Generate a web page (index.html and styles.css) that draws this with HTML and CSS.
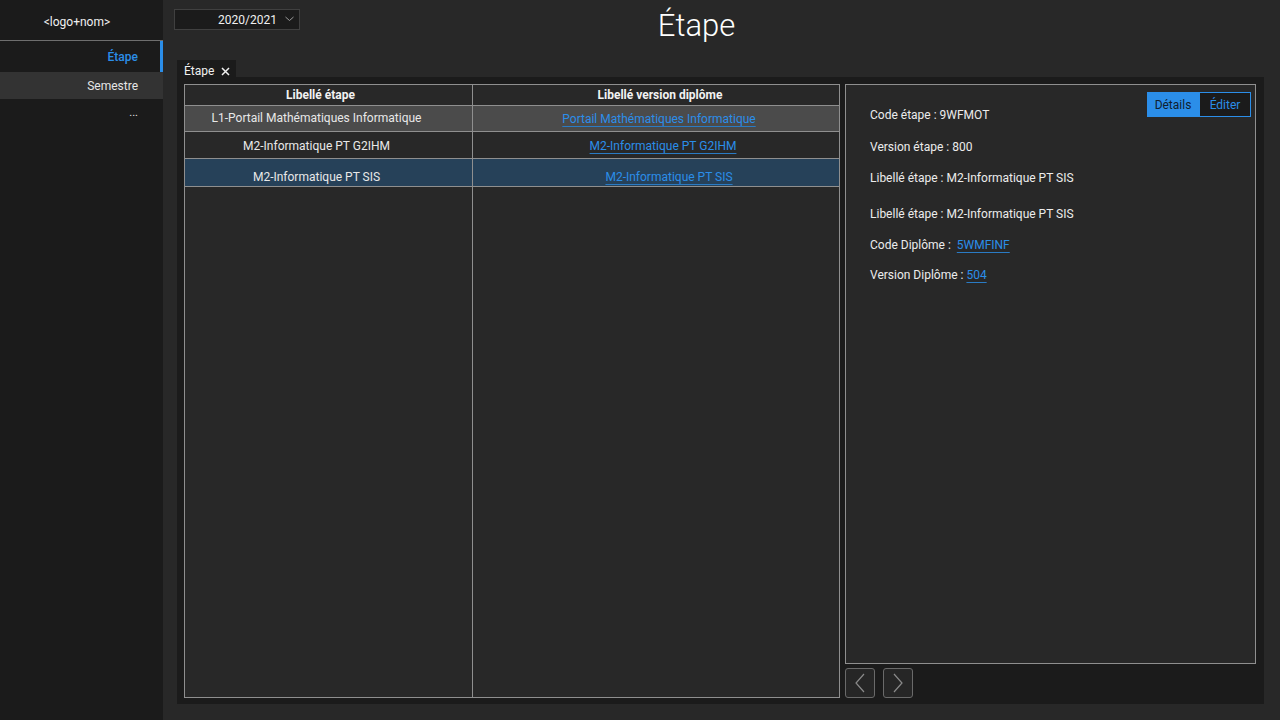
FILE: index.html
```html
<!DOCTYPE html>
<html lang="fr">
<head>
<meta charset="utf-8">
<title>Étape</title>
<link rel="stylesheet" href="styles.css">
</head>
<body>
<div class="app">
  <aside class="sidebar">
    <div class="logo">&lt;logo+nom&gt;</div>
    <nav class="nav">
      <div class="nav-item active">Étape</div>
      <div class="nav-item hover">Semestre</div>
      <div class="nav-item more">...</div>
    </nav>
  </aside>
  <main class="main">
    <header class="header">
      <div class="select">
        <span class="select-value">2020/2021</span>
        <svg class="chev" width="9" height="6" viewBox="0 0 9 6"><path d="M0.5 1 L4.5 4.5 L8.5 1" fill="none" stroke="#9a9a9a" stroke-width="1"/></svg>
      </div>
      <h1 class="title">Étape</h1>
    </header>
    <div class="tabs">
      <div class="tab">Étape <svg class="tab-close" width="9" height="9" viewBox="0 0 9 9"><path d="M1 1 L8 8 M8 1 L1 8" stroke="#f0f0f0" stroke-width="1.5" fill="none"/></svg></div>
    </div>
    <section class="workspace">
      <div class="table">
        <div class="col col-1">
          <div class="cell head">Libellé étape</div>
          <div class="cell r1 grey">L1-Portail Mathématiques Informatique</div>
          <div class="cell r2">M2-Informatique PT G2IHM</div>
          <div class="cell r3 sel">M2-Informatique PT SIS</div>
        </div>
        <div class="col col-2">
          <div class="cell head">Libellé version diplôme</div>
          <div class="cell r1 grey"><a class="link">Portail Mathématiques Informatique</a></div>
          <div class="cell r2"><a class="link">M2-Informatique PT G2IHM</a></div>
          <div class="cell r3 sel"><a class="link">M2-Informatique PT SIS</a></div>
        </div>
      </div>
      <div class="detail-col">
        <div class="detail">
          <div class="detail-top">
            <div class="line first">Code étape : 9WFMOT</div>
            <div class="toggle">
              <span class="tbtn on">Détails</span><span class="tbtn off">Éditer</span>
            </div>
          </div>
          <div class="line l2">Version étape : 800</div>
          <div class="line l3">Libellé étape : M2-Informatique PT SIS</div>
          <div class="line l4">Libellé étape : M2-Informatique PT SIS</div>
          <div class="line l5">Code Diplôme : &nbsp;<a class="link">5WMFINF</a></div>
          <div class="line l6">Version Diplôme : <a class="link">504</a></div>
        </div>
        <div class="pager">
          <button class="pbtn"><svg width="12" height="20" viewBox="0 0 12 20"><path d="M10 1 L2 10 L10 19" fill="none" stroke="#8a8a8a" stroke-width="1.2"/></svg></button>
          <button class="pbtn"><svg width="12" height="20" viewBox="0 0 12 20"><path d="M2 1 L10 10 L2 19" fill="none" stroke="#8a8a8a" stroke-width="1.2"/></svg></button>
        </div>
      </div>
    </section>
  </main>
</div>
</body>
</html>
```

FILE: styles.css
```css
* { box-sizing: border-box; }
html, body { margin: 0; padding: 0; }
body {
  width: 1280px;
  height: 720px;
  overflow: hidden;
  background: #282828;
  color: #ececec;
  font-family: Roboto, "Noto Sans", "Liberation Sans", sans-serif;
  font-size: 12px;
}
.app { display: flex; height: 720px; }

.sidebar {
  width: 163px;
  flex: none;
  background: #1b1b1b;
  display: flex;
  flex-direction: column;
}
.logo {
  height: 41px;
  line-height: 45px;
  text-align: center;
  padding-right: 9px;
  color: #f0f0f0;
  border-bottom: 1px solid #6e6e6e;
}
.nav { display: flex; flex-direction: column; }
.nav-item {
  text-align: right;
  padding-right: 25px;
  color: #e6e6e6;
}
.nav-item.active {
  height: 31px;
  line-height: 32px;
  color: #2b8ee9;
  font-weight: 500;
  border-right: 3px solid #2b8ee9;
  padding-right: 22px;
}
.nav-item.hover {
  height: 27px;
  line-height: 29px;
  background: #333333;
}
.nav-item.more {
  height: 30px;
  line-height: 28px;
  font-size: 11px;
}

.main {
  flex: 1;
  display: flex;
  flex-direction: column;
  padding: 0 16px 16px 14px;
  min-width: 0;
}
.header {
  height: 60px;
  display: flex;
  align-items: flex-start;
}
.select {
  margin-top: 9px;
  margin-left: -3px;
  width: 126px;
  height: 21px;
  background: #1b1b1b;
  border: 1px solid #404040;
  display: flex;
  align-items: center;
  justify-content: flex-end;
  padding-right: 5px;
}
.select-value { color: #f0f0f0; font-size: 12px; margin-right: 8px; }
.chev { display: block; margin-top: -2px; }
.title {
  flex: 1;
  margin: 0;
  text-align: center;
  font-weight: 300;
  font-size: 31px;
  line-height: 52px;
  color: #ffffff;
  padding-right: 171px;
}

.tabs { display: flex; height: 17px; }
.tab {
  background: #1b1b1b;
  height: 17px;
  padding: 0 6px 0 7px;
  line-height: 23px;
  color: #f0f0f0;
  font-size: 12px;
  display: flex;
  align-items: flex-start;
}
.tab-close { margin-left: 7px; margin-top: 7px; display: block; }

.workspace {
  flex: 1;
  background: #1b1b1b;
  padding: 7px 8px 6px 7px;
  display: flex;
  gap: 5px;
  min-height: 0;
}

.table {
  width: 656px;
  flex: none;
  display: flex;
  border: 1px solid #8f8f8f;
  background: #282828;
}
.col { display: flex; flex-direction: column; }
.col-1 { width: 288px; border-right: 1px solid #8f8f8f; }
.col-2 { flex: 1; }
.cell {
  text-align: center;
  border-bottom: 1px solid #8f8f8f;
  color: #e8e8e8;
  white-space: nowrap;
}
.cell.head { height: 21px; line-height: 20px; font-weight: 700; color: #f2f2f2; }
.cell.r1 { height: 26px; line-height: 24px; }
.cell.r2 { height: 27px; line-height: 28px; }
.cell.r3 { height: 28px; line-height: 36px; }
.cell.grey { background: #4b4b4b; }
.cell.sel { background: #264159; }
.col-1 .cell.head { padding-right: 16px; }
.col-1 .cell.r1, .col-1 .cell.r2, .col-1 .cell.r3 { padding-right: 24px; }
.col-2 .cell.head { padding-left: 8px; }
.col-2 .cell.r1 { padding-left: 6px; line-height: 26px; }
.col-2 .cell.r2 { padding-left: 14px; line-height: 28px; }
.col-2 .cell.r3 { padding-left: 26px; line-height: 37px; }

.link {
  color: #2b8ee9;
  text-decoration: underline;
  text-decoration-color: #2a7bc4;
  text-underline-offset: 3px;
  cursor: pointer;
}

.detail-col {
  flex: 1;
  display: flex;
  flex-direction: column;
  gap: 4px;
}
.detail {
  flex: 1;
  background: #282828;
  border: 1px solid #8f8f8f;
  padding: 7px 4px 0 24px;
}
.detail-top {
  display: flex;
  justify-content: space-between;
  align-items: flex-start;
}
.line { line-height: 16px; color: #ececec; }
.line.first { margin-top: 15px; }
.l2 { margin-top: 16px; }
.l3 { margin-top: 15px; }
.l4 { margin-top: 20px; }
.l5 { margin-top: 15px; }
.l6 { margin-top: 14px; }

.toggle { display: flex; }
.tbtn {
  width: 52px;
  height: 25px;
  line-height: 24px;
  text-align: center;
  font-size: 12px;
}
.tbtn.on { background: #2b8ee9; color: #10202e; border: 1px solid #2b8ee9; }
.tbtn.off { background: #1b1b1b; color: #2b8ee9; border: 1px solid #2b8ee9; }

.pager { display: flex; gap: 8px; height: 30px; }
.pbtn {
  width: 30px;
  height: 30px;
  background: #262626;
  border: 1px solid #6a6a6a;
  border-radius: 3px;
  padding: 0;
  display: flex;
  align-items: center;
  justify-content: center;
}
.pbtn svg { display: block; }
```
